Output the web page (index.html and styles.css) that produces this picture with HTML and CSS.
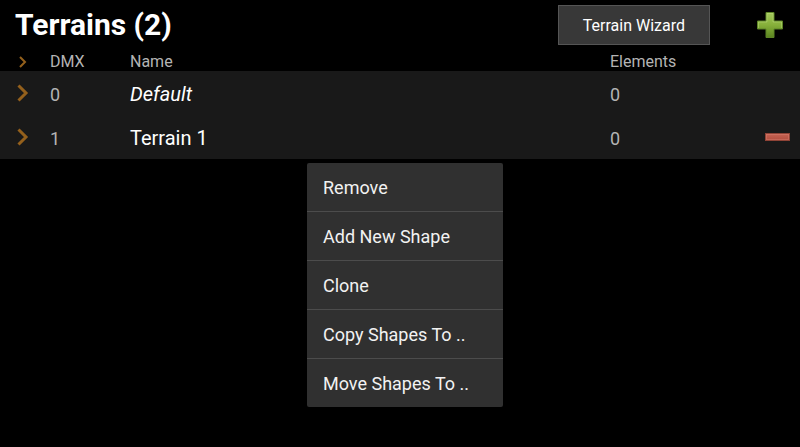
FILE: index.html
```html
<!DOCTYPE html>
<html lang="en">

<head>
  <meta charset="UTF-8" />
  <meta name="viewport" content="width=device-width, initial-scale=1.0" />
  <meta name="theme-color" content="#000000" />

  <title>Terrains</title>
  <link rel="stylesheet" href="styles.css">
</head>

<body>
  <header class="header">
    <h1 class="title">Terrains (2)</h1>
    <button class="wizard" type="button">Terrain Wizard</button>
    <button class="icon-button add" type="button" aria-label="Add terrain">
      <svg width="26" height="26" viewBox="0 0 26 26">
        <defs>
          <linearGradient id="green" x1="0" y1="0" x2="0" y2="1">
            <stop offset="0" stop-color="#a4c85c" />
            <stop offset="0.5" stop-color="#86b03a" />
            <stop offset="1" stop-color="#5b8420" />
          </linearGradient>
        </defs>
        <path d="M9 .5h8V9h8.500v8H17v8.500H9V17H.5V9H9z" fill="url(#green)" stroke="#5d8426" />
        <path d="M10 10V1.500h6V10h8.500v6" fill="none" stroke="#b9d77e" stroke-opacity="0.5" />
        <path d="M1.500 16v-6H10" fill="none" stroke="#b9d77e" stroke-opacity="0.5" />
      </svg>
    </button>
  </header>

  <main class="terrains">
    <table class="list">
      <colgroup>
        <col class="col-toggle">
        <col class="col-dmx">
        <col class="col-name">
        <col class="col-elements">
        <col class="col-remove">
      </colgroup>
      <thead>
        <tr>
          <th class="toggle">
            <button class="icon-button" type="button" aria-label="Expand all">
              <svg class="chevron" width="8" height="12" viewBox="0 0 8 12"><path d="M1 1l5 5-5 5" /></svg>
            </button>
          </th>
          <th>DMX</th>
          <th>Name</th>
          <th>Elements</th>
          <td></td>
        </tr>
      </thead>
      <tbody>
        <tr>
          <td class="toggle">
            <button class="icon-button" type="button" aria-label="Expand Default">
              <svg class="chevron large" width="12" height="18" viewBox="0 0 12 18"><path d="M1.500 1.500L9 9l-7.500 7.500" /></svg>
            </button>
          </td>
          <td>0</td>
          <td class="name default">Default</td>
          <td>0</td>
          <td></td>
        </tr>
        <tr>
          <td class="toggle">
            <button class="icon-button" type="button" aria-label="Expand Terrain 1">
              <svg class="chevron large" width="12" height="18" viewBox="0 0 12 18"><path d="M1.500 1.500L9 9l-7.500 7.500" /></svg>
            </button>
          </td>
          <td>1</td>
          <td class="name">Terrain 1</td>
          <td>0</td>
          <td class="remove">
            <button class="icon-button" type="button" aria-label="Remove Terrain 1">
              <svg width="25" height="8" viewBox="0 0 25 8">
                <defs>
                  <linearGradient id="red" x1="0" y1="0" x2="0" y2="1">
                    <stop offset="0" stop-color="#c66454" />
                    <stop offset="1" stop-color="#b34e3e" />
                  </linearGradient>
                </defs>
                <rect x=".5" y=".5" width="24" height="7" fill="url(#red)" stroke="#8f4336" />
                <rect x="1.500" y="1.500" width="22" height="5" fill="none" stroke="#dc8877" stroke-opacity="0.4" />
              </svg>
            </button>
          </td>
        </tr>
      </tbody>
    </table>

    <!-- Context menu of the selected terrain -->
    <div class="menu" role="menu">
      <button class="item" type="button" role="menuitem">Remove</button>
      <button class="item" type="button" role="menuitem">Add New Shape</button>
      <button class="item" type="button" role="menuitem">Clone</button>
      <button class="item" type="button" role="menuitem">Copy Shapes To ..</button>
      <button class="item" type="button" role="menuitem">Move Shapes To ..</button>
    </div>
  </main>
</body>

</html>
```

FILE: styles.css
```css
:root {
  --row: #191919;
  --menu: #303030;
  --line: #4c4c4c;
  --muted: #b4b4b4;
  --accent: #94601c;
}

html,
body {
  background: black;
  margin: 0;
  padding: 0;
}

body {
  min-height: 100vh;
  color: white;
  font-family: Roboto, 'Liberation Sans', sans-serif;
}

button {
  border: none;
  border-radius: 0;
  color: inherit;
  font-family: inherit;
  cursor: pointer;
}

.header {
  display: flex;
  align-items: center;
  padding: 5px 0 5px 15px;
}

.title {
  flex: 1;
  margin: 0;
  font-size: 30px;
  line-height: 40px;
  font-weight: 700;
}

.wizard {
  height: 40px;
  padding: 0 24px;
  background: #383838;
  border: 1px solid #555555;
  font-size: 16px;
}

.icon-button {
  display: block;
  padding: 0;
  background: none;
}

.icon-button svg {
  display: block;
}

.add {
  margin: 0 17px 0 47px;
}

.terrains {
  position: relative;
}

.list {
  width: 100%;
  table-layout: fixed;
  border-collapse: collapse;
}

.col-toggle {
  width: 50px;
}

.col-dmx {
  width: 80px;
}

.col-elements {
  width: 120px;
}

.col-remove {
  width: 70px;
}

.list th,
.list td {
  padding: 0;
  color: var(--muted);
  text-align: left;
}

.list th {
  height: 19px;
  padding-top: 2px;
  font-size: 16px;
  line-height: 19px;
  font-weight: 400;
}

.list tbody {
  background: var(--row);
}

.list tbody td {
  height: 42px;
  padding-top: 2px;
  font-size: 18px;
}

.list tbody .toggle,
.list tbody .remove {
  height: 44px;
  padding-top: 0;
}

.list tbody .name {
  color: white;
  font-size: 20px;
}

.list .default {
  font-style: italic;
}

.toggle .icon-button {
  margin-left: 17px;
}

th.toggle .icon-button {
  margin-left: 19px;
}

.chevron {
  fill: none;
  stroke: var(--accent);
  stroke-width: 2;
}

.chevron.large {
  stroke-width: 3;
}

.remove .icon-button {
  margin: 0 10px 0 auto;
}

.menu {
  position: absolute;
  top: calc(100% + 4px);
  left: 307px;
  width: 196px;
  background: var(--menu);
  border-radius: 2px;
}

.item {
  display: block;
  width: 100%;
  height: 48px;
  padding: 0 16px;
  background: none;
  color: #f2f2f2;
  font-size: 18px;
  text-align: left;
}

.item + .item {
  height: 49px;
  border-top: 1px solid var(--line);
}
```
